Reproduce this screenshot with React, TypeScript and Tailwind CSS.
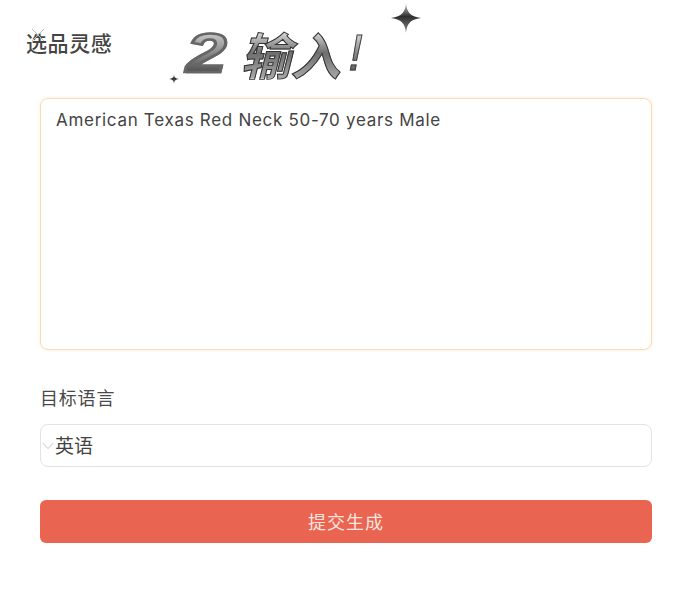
const cjk = "font-['Noto_Sans_CJK_SC','Noto_Sans',sans-serif]"

function Sparkle({ className }: { className: string }) {
  return (
    <svg viewBox="0 0 32 32" className={className}>
      <defs>
        <linearGradient id="spark" x1="0" y1="0" x2="0" y2="1">
          <stop offset="0" stopColor="#d4d4d4" />
          <stop offset="0.45" stopColor="#2f2f2f" />
          <stop offset="1" stopColor="#8a8a8a" />
        </linearGradient>
      </defs>
      <path d="M16 0 C17 10 20 14 32 16 C20 18 17 22 16 32 C15 22 12 18 0 16 C12 14 15 10 16 0Z" fill="url(#spark)" />
    </svg>
  )
}

export default function App() {
  return (
    <div className={`min-h-[600px] bg-white pl-10 pr-9 ${cjk}`}>
      {/* Header */}
      <div className="relative flex h-[98px]">
        <div className="-ml-[14px] mt-[28px] text-[21px] font-medium leading-[28px] tracking-[0.6px] text-[#444444]">选品灵感</div>
        <div className="ml-[74px] mt-[20px] flex h-[66px] items-center text-[50px] italic font-bold leading-none">
          <span className="w-[42px] origin-left scale-x-[1.3] bg-gradient-to-b from-[#e4e4e4] via-[#8a8a8a] to-[#3a3a3a] bg-clip-text font-['Liberation_Sans',sans-serif] text-[56px] font-bold text-transparent [-webkit-text-stroke:2.5px_#666666]">2</span>
          <span className="ml-[12px] bg-gradient-to-b from-[#f2f2f2] via-[#6e6e6e] to-[#a8a8a8] bg-clip-text text-transparent [-webkit-text-stroke:1px_#333333]">输入</span>
          <span className="ml-[8px] bg-gradient-to-b from-[#f2f2f2] via-[#888888] to-[#555555] bg-clip-text pr-1 font-['Liberation_Sans',sans-serif] text-[50px] font-normal text-transparent [-webkit-text-stroke:1px_#444444]">!</span>
        </div>
        <Sparkle className="absolute left-[351px] top-[2px] h-[32px] w-[30px]" />
        <Sparkle className="absolute left-[129px] top-[74px] h-[10px] w-[10px]" />
        <svg viewBox="0 0 16 16" className="absolute -left-[10px] top-[27px] h-[16px] w-[16px]">
          <path d="M2 2 L14 14 M14 2 L2 14" stroke="#bdbdbd" strokeWidth="1" />
        </svg>
      </div>

      {/* Prompt */}
      <div className="h-[252px] rounded-lg border border-[#fbdcb0] bg-white px-[15px] py-[9px] font-['Inter',sans-serif] text-[17px] leading-[24px] tracking-[0.7px] text-[#444444] shadow-[0_0_3px_rgba(251,200,130,0.35)]">
        American Texas Red Neck 50-70 years Male
      </div>

      {/* Language */}
      <div className="mt-[35px] text-[18px] leading-[24px] tracking-[0.8px] text-[#4a4a4a]">目标语言</div>
      <div className="mt-[15px] flex h-[43px] items-center rounded-lg border border-[#e3e3e6] bg-white text-[19px] text-[#444444]">
        <svg viewBox="0 0 16 10" fill="none" className="h-[10px] w-[14px] shrink-0">
          <path d="M2 1.5 L8 8 L14 1.5" stroke="#c4c4c4" strokeWidth="1.1" />
        </svg>
        <span>英语</span>
      </div>

      {/* Submit */}
      <button className="mt-[33px] flex h-[43px] w-full items-center justify-center rounded-md bg-[#e96552] text-[18px] tracking-[1px] text-[#fbe4df]">
        提交生成
      </button>
    </div>
  )
}
